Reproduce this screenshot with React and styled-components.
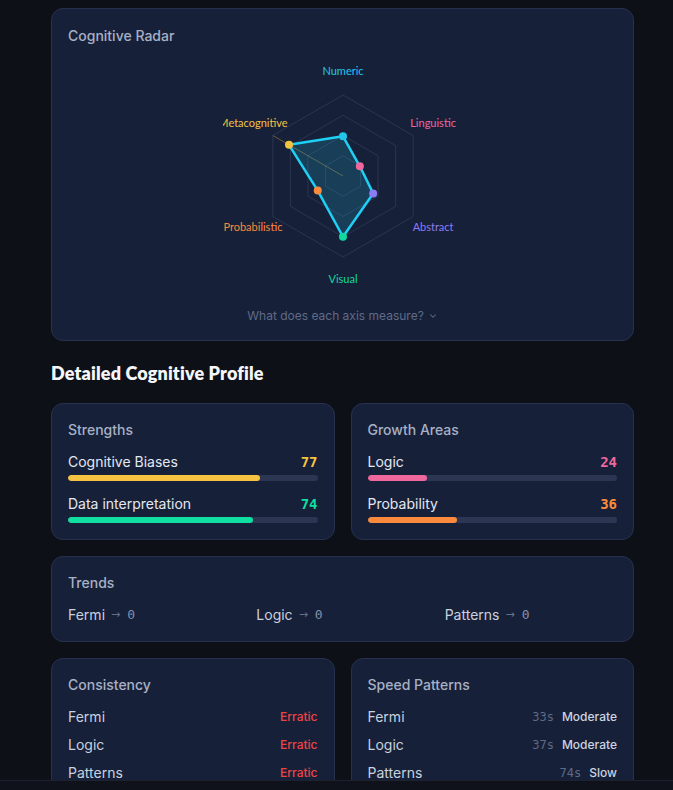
import React from "react";
import styled, { createGlobalStyle } from "styled-components";

const Global = createGlobalStyle`
  html, body { margin: 0; padding: 0; background: #0e1018; }
  body { font-family: Inter, "Noto Sans", sans-serif; -webkit-font-smoothing: antialiased; }
  * { box-sizing: border-box; }
`;

const Page = styled.div`
  min-height: 790px;
  background: #0e1018;
  padding: 8px 39px 40px 51px;
`;

const Column = styled.div`
  width: 583px;
  display: flex;
  flex-direction: column;
`;

const Card = styled.section`
  background: #172039;
  border: 1px solid #27314f;
  border-radius: 12px;
  padding: 16px;
  display: flex;
  flex-direction: column;
`;

const CardTitle = styled.h3`
  margin: 0;
  font-size: 14px;
  line-height: 20px;
  font-weight: 500;
  color: #a7b1c5;
`;

const RadarTitle = styled(CardTitle)`
  padding-top: 1px;
`;

const RadarWrap = styled.div`
  display: flex;
  justify-content: center;
  margin-top: 10px;
`;

const ToggleButton = styled.button`
  align-self: center;
  margin-top: 12px;
  background: none;
  border: none;
  padding: 0;
  display: flex;
  align-items: center;
  gap: 4px;
  font-family: Inter, sans-serif;
  font-size: 12px;
  line-height: 16px;
  color: #5f6b87;
  cursor: pointer;
`;

const SectionHeading = styled.h2`
  margin: 20px 0 18px;
  font-family: Lato, sans-serif;
  font-weight: 800;
  font-size: 18px;
  letter-spacing: 0.15px;
  line-height: 24px;
  color: #f4f6fa;
`;

const Grid2 = styled.div`
  display: grid;
  grid-template-columns: 1fr 1fr;
  gap: 16px;
`;

const Stack = styled.div`
  display: flex;
  flex-direction: column;
  gap: 16px;
`;

const BarList = styled.div`
  display: flex;
  flex-direction: column;
  gap: 13px;
  margin-top: 12px;
`;

const BarItem = styled.div`
  display: flex;
  flex-direction: column;
  gap: 3px;
`;

const BarHead = styled.div`
  display: flex;
  justify-content: space-between;
  align-items: center;
  line-height: 20px;
`;

const ItemLabel = styled.span`
  font-size: 14px;
  color: #e3e8f1;
`;

const Score = styled.span`
  font-family: "DejaVu Sans Mono", monospace;
  font-weight: 700;
  font-size: 14px;
  color: ${(p) => p.$color};
`;

const Track = styled.div`
  height: 6px;
  border-radius: 3px;
  background: #2c3652;
  overflow: hidden;
`;

const Fill = styled.div`
  height: 100%;
  border-radius: 3px;
  background: ${(p) => p.$color};
`;

const TrendRow = styled.div`
  display: grid;
  grid-template-columns: repeat(3, 1fr);
  gap: 16px;
  margin-top: 12px;
`;

const TrendItem = styled.div`
  display: flex;
  align-items: center;
  line-height: 20px;
  font-size: 14px;
  color: #c9d1de;
`;

const Arrow = styled.span`
  font-family: "DejaVu Sans", sans-serif;
  font-size: 11px;
  color: #64708a;
  margin: 0 7px 0 6px;
`;

const Mono = styled.span`
  font-family: "DejaVu Sans Mono", monospace;
  font-size: 13px;
  color: ${(p) => p.$color || "#8390ab"};
`;

const RowList = styled.div`
  display: flex;
  flex-direction: column;
  gap: 8px;
  margin-top: 12px;
`;

const Row = styled.div`
  display: flex;
  justify-content: space-between;
  align-items: center;
  line-height: 20px;
`;

const RowLabel = styled.span`
  font-size: 14px;
  color: #c9d1de;
`;

const RowRight = styled.span`
  display: flex;
  align-items: center;
  gap: 8px;
`;

const Tag = styled.span`
  font-size: 12px;
  font-weight: 500;
  color: ${(p) => p.$color};
`;

const Time = styled.span`
  font-family: "DejaVu Sans Mono", monospace;
  font-size: 12px;
  color: #5f6b84;
`;

const BottomBar = styled.div`
  position: fixed;
  left: 0;
  right: 0;
  bottom: 0;
  height: 10px;
  background: #10121b;
  border-top: 1px solid #1d2130;
`;

const AXES = [
  { name: "Numeric", value: 49, color: "#22c7ea" },
  { name: "Linguistic", value: 24, color: "#f0679e" },
  { name: "Abstract", value: 43, color: "#8b7cf6" },
  { name: "Visual", value: 75, color: "#10d9a0" },
  { name: "Probabilistic", value: 36, color: "#fb8a3c" },
  { name: "Metacognitive", value: 77, color: "#f5c242" },
];

function Radar() {
  const cx = 120;
  const cy = 120;
  const R = 81;
  const LR = 104;
  const pt = (i, r) => {
    const a = ((-90 + i * 60) * Math.PI) / 180;
    return [cx + r * Math.cos(a), cy + r * Math.sin(a)];
  };
  const hex = (r) =>
    AXES.map((_, i) => pt(i, r).map((v) => v.toFixed(2)).join(",")).join(" ");
  const dataPts = AXES.map((a, i) => pt(i, (a.value / 100) * R));
  const outerMeta = pt(5, R);
  return (
    <svg width="240" height="240" viewBox="0 0 240 240">
      {[0.25, 0.5, 0.75, 1].map((f) => (
        <polygon key={f} points={hex(R * f)} fill="none" stroke="#2b3550" strokeWidth="1" />
      ))}
      <line x1={cx} y1={cy} x2={outerMeta[0]} y2={outerMeta[1]} stroke="#f5c242" strokeOpacity="0.35" strokeWidth="1" />
      <polygon
        points={dataPts.map((p) => p.join(",")).join(" ")}
        fill="#22c7ea"
        fillOpacity="0.18"
        stroke="#1fd0f5"
        strokeWidth="2.5"
        strokeLinejoin="round"
      />
      {dataPts.map((p, i) => (
        <circle key={i} cx={p[0]} cy={p[1]} r="4" fill={AXES[i].color} />
      ))}
      {AXES.map((a, i) => {
        const [x, y] = pt(i, LR);
        return (
          <text
            key={a.name}
            x={x}
            y={y}
            textAnchor="middle"
            dominantBaseline="middle"
            fontFamily="Lato, sans-serif"
            fontSize="11"
            fill={a.color}
          >
            {a.name}
          </text>
        );
      })}
    </svg>
  );
}

function BarCard({ title, items }) {
  return (
    <Card>
      <CardTitle>{title}</CardTitle>
      <BarList>
        {items.map((it) => (
          <BarItem key={it.label}>
            <BarHead>
              <ItemLabel>{it.label}</ItemLabel>
              <Score $color={it.color}>{it.value}</Score>
            </BarHead>
            <Track>
              <Fill $color={it.color} style={{ width: `${it.value}%` }} />
            </Track>
          </BarItem>
        ))}
      </BarList>
    </Card>
  );
}

export default function App() {
  return (
    <Page>
      <Global />
      <Column>
        <Card>
          <RadarTitle>Cognitive Radar</RadarTitle>
          <RadarWrap>
            <Radar />
          </RadarWrap>
          <ToggleButton>
            What does each axis measure?
            <svg width="10" height="10" viewBox="0 0 24 24" fill="none" stroke="#5f6b87" strokeWidth="2.5" strokeLinecap="round" strokeLinejoin="round">
              <path d="m6 9 6 6 6-6" />
            </svg>
          </ToggleButton>
        </Card>

        <SectionHeading>Detailed Cognitive Profile</SectionHeading>

        <Stack>
          <Grid2>
            <BarCard
              title="Strengths"
              items={[
                { label: "Cognitive Biases", value: 77, color: "#f5c242" },
                { label: "Data interpretation", value: 74, color: "#10dfa2" },
              ]}
            />
            <BarCard
              title="Growth Areas"
              items={[
                { label: "Logic", value: 24, color: "#f0679e" },
                { label: "Probability", value: 36, color: "#fb8a3c" },
              ]}
            />
          </Grid2>

          <Card>
            <CardTitle>Trends</CardTitle>
            <TrendRow>
              {["Fermi", "Logic", "Patterns"].map((t) => (
                <TrendItem key={t}>
                  {t}
                  <Arrow>→</Arrow>
                  <Mono>0</Mono>
                </TrendItem>
              ))}
            </TrendRow>
          </Card>

          <Grid2>
            <Card>
              <CardTitle>Consistency</CardTitle>
              <RowList>
                {["Fermi", "Logic", "Patterns"].map((t) => (
                  <Row key={t}>
                    <RowLabel>{t}</RowLabel>
                    <Tag $color="#ef4444">Erratic</Tag>
                  </Row>
                ))}
              </RowList>
            </Card>
            <Card>
              <CardTitle>Speed Patterns</CardTitle>
              <RowList>
                {[
                  ["Fermi", "33s", "Moderate"],
                  ["Logic", "37s", "Moderate"],
                  ["Patterns", "74s", "Slow"],
                ].map(([t, s, l]) => (
                  <Row key={t}>
                    <RowLabel>{t}</RowLabel>
                    <RowRight>
                      <Time>{s}</Time>
                      <Tag $color="#cdd4e0">{l}</Tag>
                    </RowRight>
                  </Row>
                ))}
              </RowList>
            </Card>
          </Grid2>
        </Stack>
      </Column>
      <BottomBar />
    </Page>
  );
}
